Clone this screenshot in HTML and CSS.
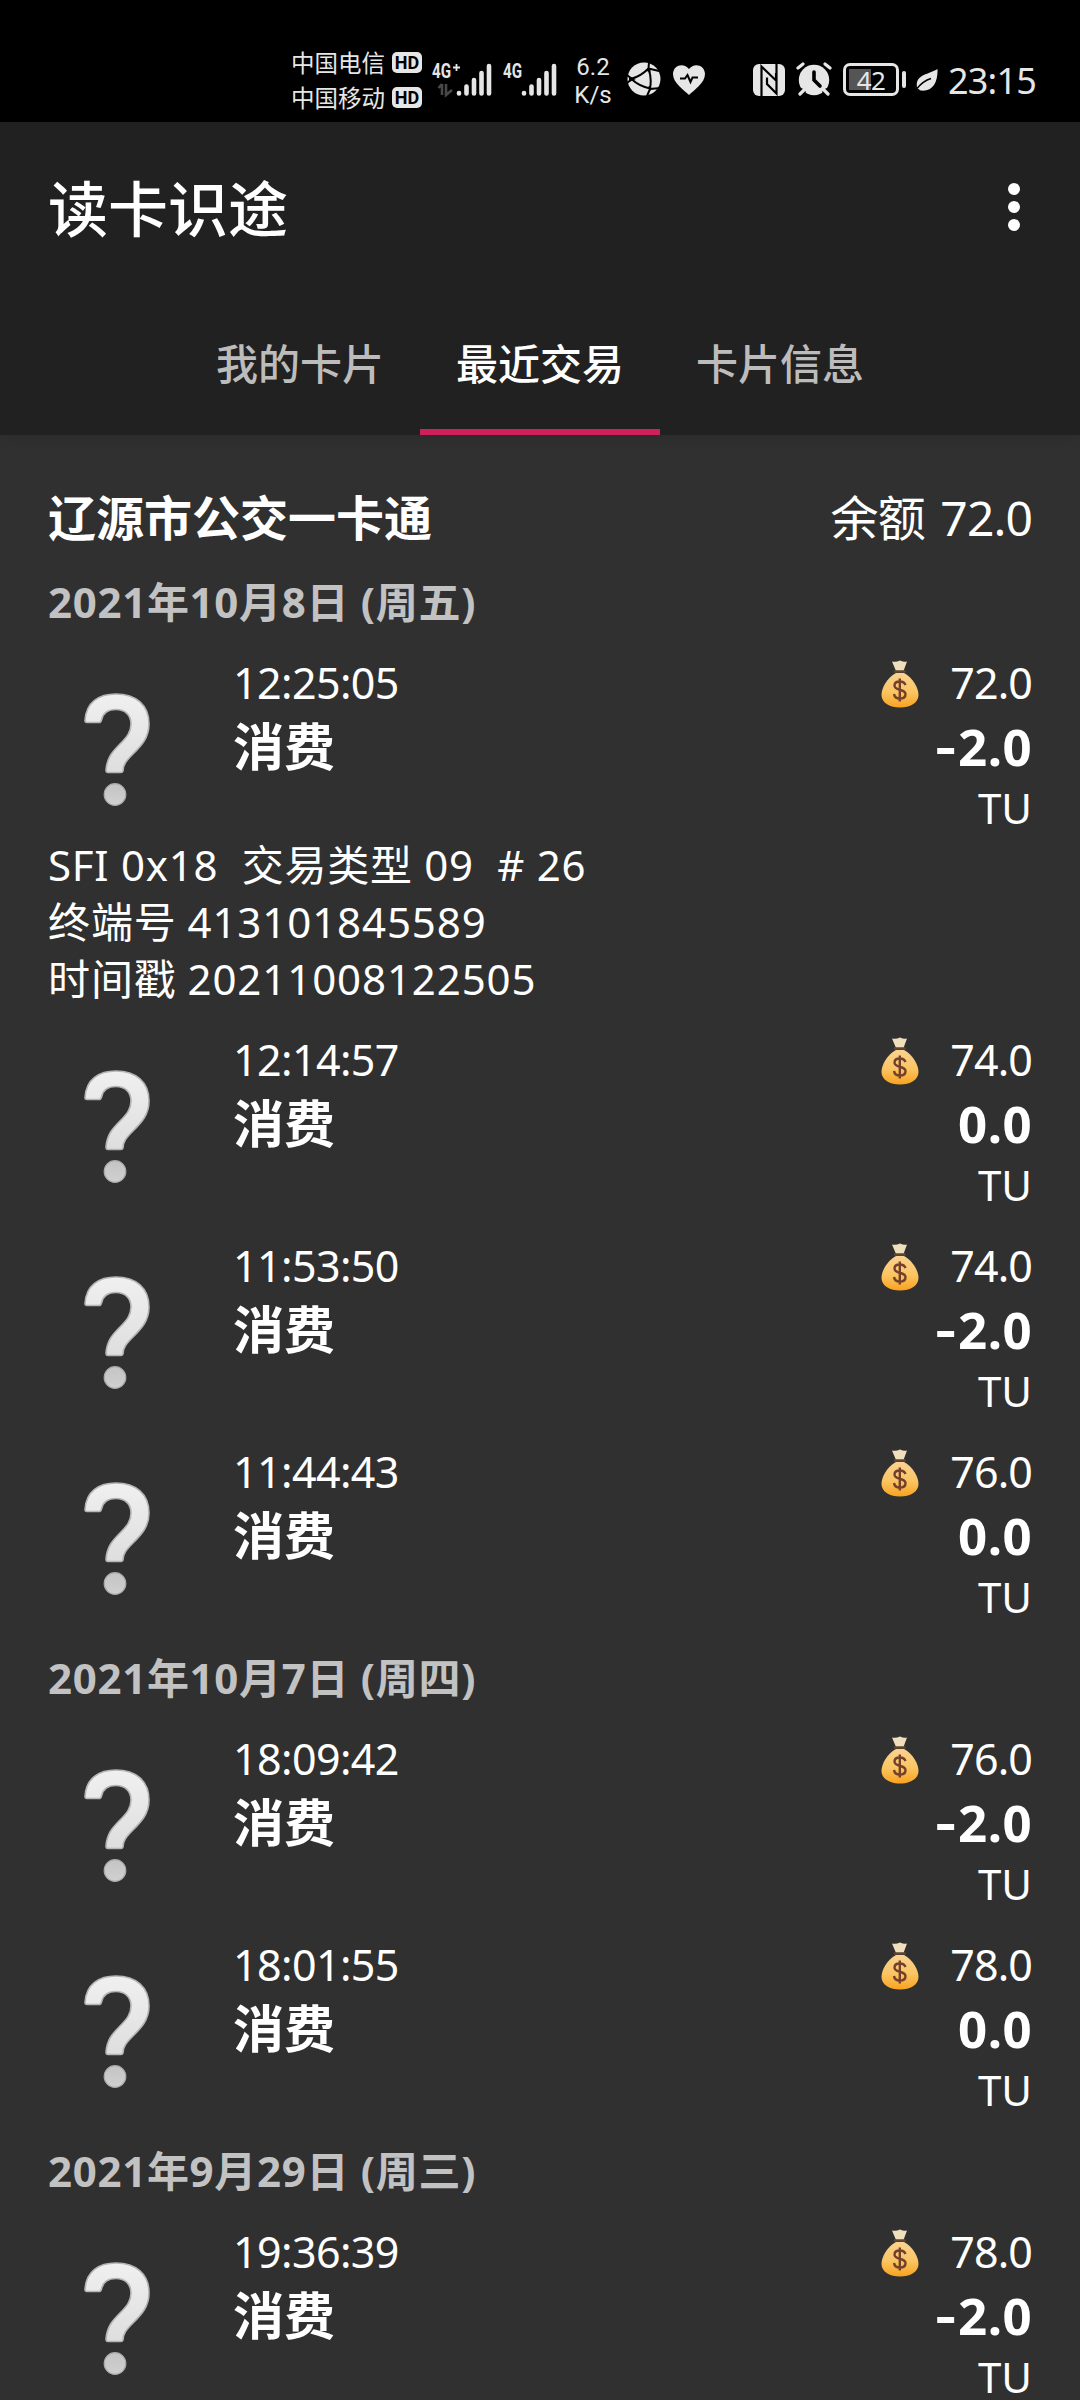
FILE: index.html
```
<!DOCTYPE html>
<html lang="zh-CN">
<head>
<meta charset="utf-8">
<title>读卡识途</title>
<link rel="stylesheet" href="styles.css">
</head>
<body>
<svg class="defs" aria-hidden="true">
  <defs>
    <linearGradient id="qg" x1="0" y1="0" x2="0" y2="1"><stop offset="0" stop-color="#f0f0f0"/><stop offset="1" stop-color="#dedede"/></linearGradient>
    <linearGradient id="dg" x1="0" y1="0" x2="0" y2="1"><stop offset="0" stop-color="#c4c4c4"/><stop offset="1" stop-color="#d0d0d0"/></linearGradient>
    <linearGradient id="bg" x1="0" y1="0" x2="0" y2="1"><stop offset="0" stop-color="#fad291"/><stop offset=".55" stop-color="#fac562"/><stop offset="1" stop-color="#f9a21f"/></linearGradient>
    <symbol id="question" viewBox="0 0 66 114">
      <path d="M1 27.500C2 9 15 1 32 1C52 1 65 12 65 31C65 45 57 53 49 61C42 68 39 72 39 78Q38.500 79.500 37 79.500H24Q22 79.500 22 77C23 65 28 59 36 51C43 44 47 39 47 31C47 22 41 16.500 32 16.500C23 16.500 19 20 17.500 27Q17 29.500 15 29.500H3Q1 29.500 1 27.500Z" fill="url(#qg)" stroke="#b5b5b5" stroke-width="1.600"/>
      <circle cx="31" cy="101.500" r="10.800" fill="url(#dg)" stroke="#aaa" stroke-width="1.200"/>
    </symbol>
    <symbol id="bag" viewBox="0 0 38 48">
      <path d="M11 1.500Q15 2.500 19 .5Q23 2.500 26 1.500L22.500 11H15Z" fill="#efdfbd"/>
      <path d="M15 13C6 18 .5 28 .5 35C.5 43 9 47.500 19 47.500S37.500 43 37.500 35C37.500 28 32 18 23 13Z" fill="url(#bg)"/>
      <path d="M14 11.500H23.500" stroke="#5f4632" stroke-width="2.600" stroke-linecap="round"/>
      <path d="M24.500 25C23.500 22 21.500 21.500 18.700 21.500C15.500 21.500 13.500 23 13.500 25.600C13.500 31.500 24.500 28 24.500 34.300C24.500 37.300 22 38.600 18.700 38.600C15.500 38.600 13.500 37 13 34M18.800 18.500V41.500" fill="none" stroke="#73402b" stroke-width="2.400"/>
    </symbol>
  </defs>
</svg>

<header class="status">
  <div class="carriers">
    <div class="carrier"><span>中国电信</span><b class="hd">HD</b></div>
    <div class="carrier"><span>中国移动</span><b class="hd">HD</b></div>
  </div>
  <div class="signal signal-a">
    <svg width="64" height="44" viewBox="0 -8 64 44">
      <text x="0" y="15.700" class="net">4G</text>
      <path d="M21 5.500H28M24.500 2V9" stroke="#e6e6e6" stroke-width="1.800"/>
      <path d="M10 22V33M10 22L6.500 26M14 22V33L20 28" stroke="#484848" stroke-width="2.600" fill="none"/>
      <path d="M27 31V31.500M34.500 24.500V31.500M42 18V31.500M49.500 11V31.500M57 4V31.500" stroke="#e6e6e6" stroke-width="4.600" stroke-linecap="round"/>
    </svg>
  </div>
  <div class="signal signal-b">
    <svg width="56" height="44" viewBox="0 -8 56 44">
      <text x="0" y="15.700" class="net">4G</text>
      <path d="M21 31V31.500M28.500 24.500V31.500M36 18V31.500M43.500 11V31.500M51 4V31.500" stroke="#e6e6e6" stroke-width="4.600" stroke-linecap="round"/>
    </svg>
  </div>
  <div class="speed"><span>6.2</span><span>K/s</span></div>
  <svg class="ball" width="34" height="34" viewBox="0 0 34 34">
    <circle cx="17" cy="17" r="16.500" fill="#e6e6e6"/>
    <path d="M0 13L5 17L0 21M5 16.500Q14 14 21.500 6.500M5 17.500Q12 24 23 26.500M22 0L21.500 6.500L32 9M21.500 7Q25 16 23 26.500M34 26L23 27L20 34" fill="none" stroke="#000" stroke-width="2"/>
    <path d="M2 14.500L9 17L2 20ZM20 9L23.500 11V6L20 6ZM21 25L24 23V29Z" fill="#000"/>
  </svg>
  <svg class="heart" width="34" height="32" viewBox="0 0 34 32">
    <path d="M17 31C12 26 1 19 1 10C1 1 12 -2 17 5C22 -2 33 1 33 10C33 19 22 26 17 31Z" fill="#e6e6e6"/>
    <path d="M8 14.500H13L15.500 11L18.500 18L20.500 13.500H26" fill="none" stroke="#000" stroke-width="2"/>
  </svg>
  <svg class="nfc" width="32" height="32" viewBox="0 0 32 32">
    <rect width="32" height="32" rx="6" fill="#e6e6e6"/>
    <path d="M8.500 32V2.500L23 16.500V9M23.500 0V29.500L14 20V13.500" fill="none" stroke="#000" stroke-width="2.200"/>
  </svg>
  <svg class="alarm" width="36" height="34" viewBox="0 0 36 34">
    <circle cx="18" cy="18" r="15.200" fill="#e6e6e6"/>
    <path d="M2 6L7 2M34 6L29 2M4 32L8 28M32 32L28 28" stroke="#000" stroke-width="6"/>
    <path d="M2 6L7 2M34 6L29 2M4 32L8 28M32 32L28 28" stroke="#e6e6e6" stroke-width="3.200" stroke-linecap="round"/>
    <path d="M18 10V18L24 24" fill="none" stroke="#000" stroke-width="3.600" stroke-linecap="round"/>
  </svg>
  <div class="battery"><div class="cell"><span>42</span></div><i></i></div>
  <svg class="leaf" width="22" height="24" viewBox="0 0 22 24">
    <path d="M21.500 1C22 14 17 24 4.500 22.500L1 20C-1 6 12 7 21.500 1Z" fill="#e6e6e6"/>
    <path d="M1 20.500Q7 13 15 10.500" fill="none" stroke="#000" stroke-width="1.600"/>
  </svg>
  <time class="clock">23:15</time>
</header>

<nav class="appbar">
  <div class="toolbar">
    <h1>读卡识途</h1>
    <div class="more"><i></i><i></i><i></i></div>
  </div>
  <div class="tabs">
    <div class="tab">我的卡片</div>
    <div class="tab active">最近交易</div>
    <div class="tab">卡片信息</div>
  </div>
</nav>

<main>
  <div class="card"><b>辽源市公交一卡通</b><span>余额 72.0</span></div>

  <h2>2021年10月8日 (周五)</h2>
  <article>
    <div class="row">
      <svg class="icon"><use href="#question"/></svg>
      <div class="what"><time>12:25:05</time><b>消费</b></div>
      <div class="sum"><span class="left"><svg class="bag"><use href="#bag"/></svg>72.0</span><b><i class="minus">-</i>2.0</b><small>TU</small></div>
    </div>
    <div class="details">
      <p>SFI 0x18&nbsp; 交易类型 09&nbsp; # 26</p>
      <p class="num">终端号 413101845589</p>
      <p class="num">时间戳 20211008122505</p>
    </div>
  </article>
  <article>
    <div class="row">
      <svg class="icon"><use href="#question"/></svg>
      <div class="what"><time>12:14:57</time><b>消费</b></div>
      <div class="sum"><span class="left"><svg class="bag"><use href="#bag"/></svg>74.0</span><b>0.0</b><small>TU</small></div>
    </div>
  </article>
  <article>
    <div class="row">
      <svg class="icon"><use href="#question"/></svg>
      <div class="what"><time>11:53:50</time><b>消费</b></div>
      <div class="sum"><span class="left"><svg class="bag"><use href="#bag"/></svg>74.0</span><b><i class="minus">-</i>2.0</b><small>TU</small></div>
    </div>
  </article>
  <article>
    <div class="row">
      <svg class="icon"><use href="#question"/></svg>
      <div class="what"><time>11:44:43</time><b>消费</b></div>
      <div class="sum"><span class="left"><svg class="bag"><use href="#bag"/></svg>76.0</span><b>0.0</b><small>TU</small></div>
    </div>
  </article>

  <h2>2021年10月7日 (周四)</h2>
  <article>
    <div class="row">
      <svg class="icon"><use href="#question"/></svg>
      <div class="what"><time>18:09:42</time><b>消费</b></div>
      <div class="sum"><span class="left"><svg class="bag"><use href="#bag"/></svg>76.0</span><b><i class="minus">-</i>2.0</b><small>TU</small></div>
    </div>
  </article>
  <article>
    <div class="row">
      <svg class="icon"><use href="#question"/></svg>
      <div class="what"><time>18:01:55</time><b>消费</b></div>
      <div class="sum"><span class="left"><svg class="bag"><use href="#bag"/></svg>78.0</span><b>0.0</b><small>TU</small></div>
    </div>
  </article>

  <h2>2021年9月29日 (周三)</h2>
  <article>
    <div class="row">
      <svg class="icon"><use href="#question"/></svg>
      <div class="what"><time>19:36:39</time><b>消费</b></div>
      <div class="sum"><span class="left"><svg class="bag"><use href="#bag"/></svg>78.0</span><b><i class="minus">-</i>2.0</b><small>TU</small></div>
    </div>
  </article>
</main>
</body>
</html>
```
FILE: styles.css
```
* { box-sizing: border-box; margin: 0; padding: 0; }
html, body { width: 1080px; height: 2400px; overflow: hidden; }
body {
  background: #303030;
  color: #fff;
  font-family: "Noto Sans", "Noto Sans CJK SC", sans-serif;
  display: flex;
  flex-direction: column;
}
svg { display: block; flex: none; }
.defs { width: 0; height: 0; position: absolute; }

/* status bar */
.status {
  height: 122px;
  flex: none;
  background: #000;
  color: #e6e6e6;
  display: flex;
  align-items: flex-start;
  padding-left: 291px;
}
.carriers { width: 141px; padding-top: 45px; }
.carrier { display: flex; gap: 6px; align-items: center; height: 35px; font: 23.5px/35px "Noto Sans CJK SC", sans-serif; }
.carrier span { width: 95px; white-space: nowrap; }
.hd { width: 30px; height: 21px; border-radius: 5px; background: #e6e6e6; color: #000; font: bold 18px/21px Roboto, sans-serif; text-align: center; }
.signal { padding-top: 54px; }
.signal-a { width: 71px; }
.signal-b { width: 72px; }
.net { font: bold 20.5px Roboto, sans-serif; fill: #e6e6e6; transform: scaleX(.74); }
.speed { width: 36px; padding-top: 53px; margin-right: 16px; display: flex; flex-direction: column; align-items: center; font: 24px/28px Roboto, sans-serif; white-space: nowrap; }
.ball { margin-top: 62px; }
.heart { margin: 64px 0 0 11px; }
.nfc { margin: 64px 0 0 47px; }
.alarm { margin: 62px 0 0 11px; }
.battery { display: flex; align-items: center; gap: 3px; margin: 63px 0 0 11px; }
.cell { width: 56px; height: 33px; border: 3px solid #e6e6e6; border-radius: 7px; background: linear-gradient(#555, #555) 3px 3px / 22px 21px no-repeat; display: flex; justify-content: center; align-items: center; font: 26px/26px "Noto Sans", sans-serif; letter-spacing: -.5px; }
.battery i { width: 4px; height: 17px; border-radius: 2px; background: #e6e6e6; }
.leaf { margin: 68px 0 0 10px; }
.clock { margin: 53px 0 0 10px; font: 36px/56px "Noto Sans", sans-serif; letter-spacing: -.8px; }

/* app bar */
.appbar { height: 313px; flex: none; background: #212121; display: flex; flex-direction: column; box-shadow: 0 2px 12px rgba(0, 0, 0, .12); }
.toolbar { height: 168px; display: flex; align-items: center; justify-content: space-between; padding: 2px 60px 0 48px; }
.toolbar h1 { font: 500 60px/80px "Noto Sans CJK SC", sans-serif; padding-bottom: 3px; }
.more { display: flex; flex-direction: column; gap: 6px; }
.more i { width: 12px; height: 12px; border-radius: 50%; background: #fff; }
.tabs { flex: 1; display: flex; justify-content: center; }
.tab { width: 240px; padding-top: 42px; text-align: center; color: #bcbcbc; font: 500 42px/60px "Noto Sans CJK SC", sans-serif; }
.tab.active { color: #fff; border-bottom: 6px solid #d0205a; }

/* list */
main { flex: 1; min-height: 0; overflow: hidden; padding: 45px 48px 0; }
.card { height: 81px; display: flex; justify-content: space-between; font-size: 48px; line-height: 76px; white-space: nowrap; }
.card span { letter-spacing: -.9px; word-spacing: 4px; }
h2 { height: 81px; padding-top: 1px; font-size: 42px; line-height: 80px; color: #c2c2c2; font-weight: 700; letter-spacing: .7px; white-space: nowrap; }
.row { height: 194px; padding-top: 12px; display: flex; }
article { padding-bottom: 12px; }
.icon { width: 66px; height: 114px; margin: 39px 0 0 36px; }
.what { margin-left: 83px; flex: 1; display: flex; flex-direction: column; }
.what time { font-size: 43px; line-height: 58px; letter-spacing: -.6px; }
.what b, .sum b { font-size: 51px; line-height: 68px; }
.sum { display: flex; flex-direction: column; align-items: flex-end; }
.sum b { letter-spacing: .4px; }
.minus { font-family: Inter, sans-serif; font-style: normal; line-height: 1; }
.left { display: flex; font-size: 43px; line-height: 58px; letter-spacing: -.9px; }
.bag { width: 38px; height: 48px; margin: 6px 31px 0 0; }
.sum small { font-size: 42px; line-height: 56px; }
.details { font-size: 42px; line-height: 57px; letter-spacing: .75px; white-space: nowrap; }
.num { letter-spacing: .9px; word-spacing: -1px; }
```
